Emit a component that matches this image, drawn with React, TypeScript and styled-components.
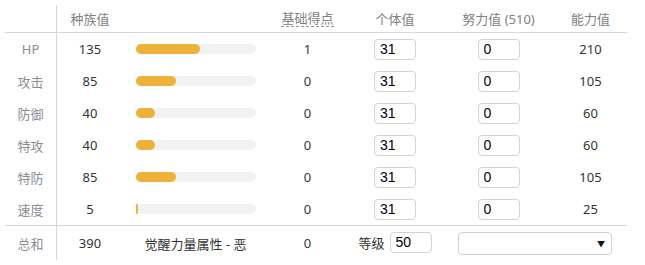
import React from 'react';
import styled, { createGlobalStyle } from 'styled-components';

const GlobalStyle = createGlobalStyle`
  body {
    margin: 0;
    background: #fff;
    font-family: "Noto Sans", "Noto Sans CJK SC", sans-serif;
  }
`;

const COLS = '52px 66px 145px 79px 96px 111px 73px';

const Table = styled.div`
  margin: 5px 0 0 5px;
  width: 622px;
  font-size: 13px;
  color: #333;
`;

const Row = styled.div<{ $divider?: boolean; $height: number }>`
  display: grid;
  grid-template-columns: ${COLS};
  height: ${p => p.$height}px;
  border-bottom: ${p => (p.$divider ? '1px solid #d3d7e0' : 'none')};
`;

const Cell = styled.div`
  display: flex;
  align-items: center;
  justify-content: center;
  white-space: nowrap;
`;

const LabelCell = styled(Cell)`
  color: #8a8d93;
  border-right: 1px solid #d3d7e0;
`;

const HeadCell = styled(Cell)`
  color: #808080;
  padding-bottom: 1px;
`;

const Dashed = styled.span`
  border-bottom: 1px dashed #999;
  line-height: 16px;
`;

const BarCell = styled(Cell)`
  justify-content: flex-start;
  padding-left: 13px;
`;

const BarTrack = styled.div`
  width: 120px;
  height: 10px;
  border-radius: 5px;
  background: #f2f2f2;
`;

const BarFill = styled.div`
  height: 100%;
  border-radius: 5px;
  background: #eeb23a;
`;

const NumInput = styled.input`
  box-sizing: border-box;
  width: 42px;
  height: 21px;
  padding: 0 0 0 5px;
  border: 1px solid #cfd2d8;
  border-radius: 4px;
  font-family: "Liberation Sans", Arial, sans-serif;
  font-size: 14px;
  color: #000;
  outline: none;
`;

const LevelGroup = styled(Cell)`
  gap: 5px;
  padding-bottom: 2px;
`;

const SpanCell = styled(Cell)`
  grid-column: span 2;
`;

const SelectBox = styled.div`
  box-sizing: border-box;
  width: 154px;
  height: 23px;
  border: 1px solid #cfd2d8;
  border-radius: 4px;
  display: flex;
  align-items: center;
  justify-content: flex-end;
  padding-right: 6px;
  font-size: 8px;
  color: #111;
`;

const stats = [
  { name: 'HP', base: 135, pt: 1, total: 210 },
  { name: '攻击', base: 85, pt: 0, total: 105 },
  { name: '防御', base: 40, pt: 0, total: 60 },
  { name: '特攻', base: 40, pt: 0, total: 60 },
  { name: '特防', base: 85, pt: 0, total: 105 },
  { name: '速度', base: 5, pt: 0, total: 25 },
];

const App: React.FC = () => {
  return (
    <>
      <GlobalStyle />
      <Table>
        <Row $height={27} $divider>
          <LabelCell />
          <HeadCell>种族值</HeadCell>
          <HeadCell />
          <HeadCell>
            <Dashed>基础得点</Dashed>
          </HeadCell>
          <HeadCell>个体值</HeadCell>
          <HeadCell>努力值 (510)</HeadCell>
          <HeadCell>能力值</HeadCell>
        </Row>
        {stats.map((s, i) => (
          <Row key={s.name} $height={32} $divider={i === stats.length - 1}>
            <LabelCell>{s.name}</LabelCell>
            <Cell>{s.base}</Cell>
            <BarCell>
              <BarTrack>
                <BarFill style={{ width: `${(s.base / 255) * 120}px` }} />
              </BarTrack>
            </BarCell>
            <Cell>{s.pt}</Cell>
            <Cell>
              <NumInput defaultValue="31" />
            </Cell>
            <Cell>
              <NumInput defaultValue="0" />
            </Cell>
            <Cell>{s.total}</Cell>
          </Row>
        ))}
        <Row $height={34}>
          <LabelCell>总和</LabelCell>
          <Cell>390</Cell>
          <Cell>觉醒力量属性 - 恶</Cell>
          <Cell>0</Cell>
          <LevelGroup>
            等级
            <NumInput defaultValue="50" />
          </LevelGroup>
          <SpanCell>
            <SelectBox>▼</SelectBox>
          </SpanCell>
        </Row>
      </Table>
    </>
  );
};

export default App;
